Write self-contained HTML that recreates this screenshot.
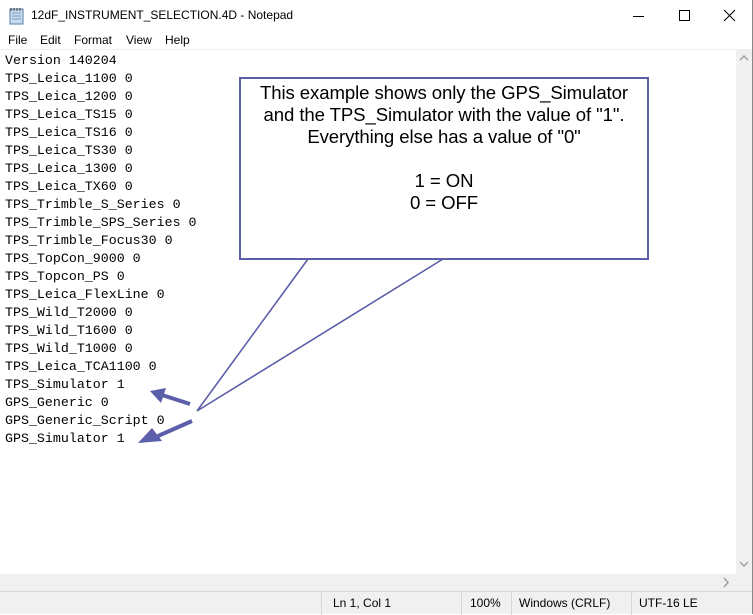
<!DOCTYPE html>
<html><head><style>
body{margin:0;width:753px;height:614px;overflow:hidden;background:#fff;font-family:"Liberation Sans",sans-serif;position:relative}
.abs{position:absolute}
#title{left:0;top:0;width:753px;height:31px;background:#fff}
#menu{left:0;top:31px;width:753px;height:19px;font-size:12px;color:#000}
#menu span{position:absolute;top:2px}
#text{left:5px;top:52px;font-family:"Liberation Mono",monospace;font-size:13.3px;line-height:18px;white-space:pre;color:#000}
#vs{left:736px;top:50px;width:16px;height:524px;background:#f0f0f0}
#hs{left:0;top:574px;width:752px;height:17px;background:#f0f0f0}
#sb{left:0;top:591px;width:752px;height:23px;background:#f0f0f0;border-top:1px solid #d7d7d7;box-sizing:border-box;font-size:12px}
#sb span{position:absolute;top:4px}
.sep{position:absolute;top:0;width:1px;height:23px;background:#d7d7d7}
#box{left:239px;top:77px;width:410px;height:183px;border:2px solid #5b5ea8;box-sizing:border-box;background:#fff;text-align:center;font-size:18.6px;line-height:22px;padding-top:3px;letter-spacing:-0.1px}
</style></head><body>
<div class="abs" id="title">
<svg class="abs" style="left:9px;top:7px" width="16" height="18"><rect x="1" y="2" width="13" height="15" fill="#c8dcef" stroke="#5a7fa6"/><path d="M3 6h9M3 9h9M3 12h9" stroke="#7a9cc0"/><path d="M2 1v3M5 1v3M8 1v3M11 1v3" stroke="#444"/></svg>
<div class="abs" style="left:31px;top:8px;font-size:12px">12dF_INSTRUMENT_SELECTION.4D - Notepad</div>
<svg class="abs" style="left:630px;top:9px" width="110" height="14"><path d="M3 7.5h11" stroke="#000"/><rect x="49.5" y="1.5" width="10" height="10" fill="none" stroke="#000"/><path d="M94 1l11 11M105 1l-11 11" stroke="#000"/></svg>
</div>
<div class="abs" id="menu"><span style="left:8px">File</span><span style="left:40px">Edit</span><span style="left:74px">Format</span><span style="left:126px">View</span><span style="left:165px">Help</span></div>
<div class="abs" style="left:0;top:49px;width:753px;height:1px;background:#f0f0f0"></div>
<div class="abs" id="text">Version 140204
TPS_Leica_1100 0
TPS_Leica_1200 0
TPS_Leica_TS15 0
TPS_Leica_TS16 0
TPS_Leica_TS30 0
TPS_Leica_1300 0
TPS_Leica_TX60 0
TPS_Trimble_S_Series 0
TPS_Trimble_SPS_Series 0
TPS_Trimble_Focus30 0
TPS_TopCon_9000 0
TPS_Topcon_PS 0
TPS_Leica_FlexLine 0
TPS_Wild_T2000 0
TPS_Wild_T1600 0
TPS_Wild_T1000 0
TPS_Leica_TCA1100 0
TPS_Simulator 1
GPS_Generic 0
GPS_Generic_Script 0
GPS_Simulator 1</div>
<div class="abs" id="box">This example shows only the GPS_Simulator<br>and the TPS_Simulator with the value of "1".<br>Everything else has a value of "0"<br><br>1 = ON<br>0 = OFF</div>
<svg class="abs" style="left:0;top:0" width="753" height="614">
<path d="M308 259L197 411L443 259" fill="none" stroke="#5b5ea8" stroke-width="1.6"/>
<path d="M190 404L162 395" stroke="#5b5ea8" stroke-width="4"/>
<path d="M150 391L166 388L161 403Z" fill="#5b5ea8"/>
<path d="M192 421L158 436" stroke="#5b5ea8" stroke-width="4"/>
<path d="M138 443L152 428L162 441Z" fill="#5b5ea8"/>
</svg>
<div class="abs" id="vs"><svg width="16" height="20"><path d="M4 10l4-4 4 4" fill="none" stroke="#a0a0a0" stroke-width="1.5"/></svg><svg class="abs" style="left:0;top:504px" width="16" height="20"><path d="M4 8l4 4 4-4" fill="none" stroke="#a0a0a0" stroke-width="1.5"/></svg></div>
<div class="abs" id="hs"><svg class="abs" style="left:716px;top:0" width="20" height="17"><path d="M8 4l4 4.5-4 4.5" fill="none" stroke="#a0a0a0" stroke-width="1.5"/></svg></div>
<div class="abs" id="sb"><div class="sep" style="left:321px"></div><div class="sep" style="left:461px"></div><div class="sep" style="left:511px"></div><div class="sep" style="left:631px"></div>
<span style="left:333px">Ln 1, Col 1</span><span style="left:470px">100%</span><span style="left:519px">Windows (CRLF)</span><span style="left:639px">UTF-16 LE</span></div>
<div class="abs" style="left:752px;top:0;width:1px;height:614px;background:#888"></div>
</body></html>
